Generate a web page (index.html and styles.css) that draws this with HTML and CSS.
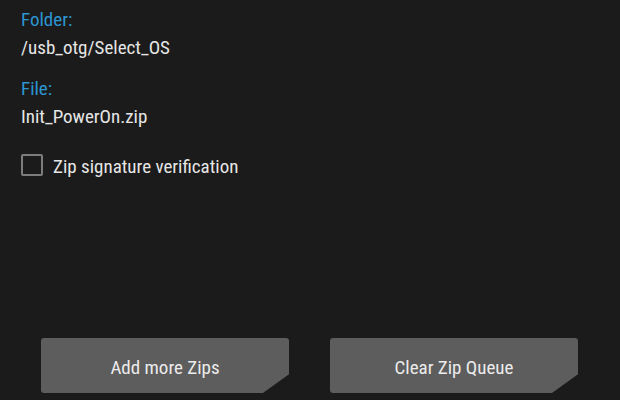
FILE: index.html
```html
<!DOCTYPE html>
<html>
<head>
<meta charset="utf-8">
<link rel="stylesheet" href="styles.css">
</head>
<body>
<div class="screen">
  <div class="info">
    <div class="field">
      <div class="label">Folder:</div>
      <div class="value">/usb_otg/Select_OS</div>
    </div>
    <div class="field">
      <div class="label">File:</div>
      <div class="value">Init_PowerOn.zip</div>
    </div>
    <label class="check">
      <span class="box"></span>
      <span class="check-text">Zip signature verification</span>
    </label>
  </div>
  <div class="buttons">
    <div class="btn"><span>Add more Zips</span></div>
    <div class="btn"><span>Clear Zip Queue</span></div>
  </div>
</div>
</body>
</html>
```
FILE: styles.css
```css
html, body {
  margin: 0;
  padding: 0;
  background: #1b1b1b;
}
.screen {
  width: 620px;
  height: 400px;
  display: flex;
  flex-direction: column;
  justify-content: space-between;
  font-family: Roboto, "Liberation Sans", sans-serif;
  font-stretch: 75%;
  color: #e6e6e6;
  box-sizing: border-box;
  padding: 9px 0 7px 0;
}
.info {
  padding-left: 21px;
  display: flex;
  flex-direction: column;
}
.field + .field {
  margin-top: 18px;
}
.label {
  color: #2c96d2;
  font-size: 19px;
  line-height: 22px;
}
.value {
  margin-top: 5px;
  font-size: 19px;
  line-height: 24px;
}
.check {
  display: flex;
  align-items: flex-start;
  gap: 10px;
  margin-top: 25px;
}
.box {
  width: 18px;
  height: 18px;
  border: 2px solid #7c7c7c;
  border-radius: 2px;
}
.check-text {
  margin-top: 1px;
  font-size: 19px;
  line-height: 24px;
}
.buttons {
  display: flex;
  justify-content: space-between;
  padding: 0 42px 0 41px;
}
.btn {
  width: 248px;
  height: 55px;
  box-sizing: border-box;
  padding-top: 4px;
  background: #5d5d5d;
  border-radius: 3px 3px 0 3px;
  display: flex;
  align-items: center;
  justify-content: center;
  clip-path: polygon(0 0, 100% 0, 100% 66%, 89.5% 100%, 0 100%);
  font-size: 19px;
  line-height: 24px;
  color: #ececec;
}
```
